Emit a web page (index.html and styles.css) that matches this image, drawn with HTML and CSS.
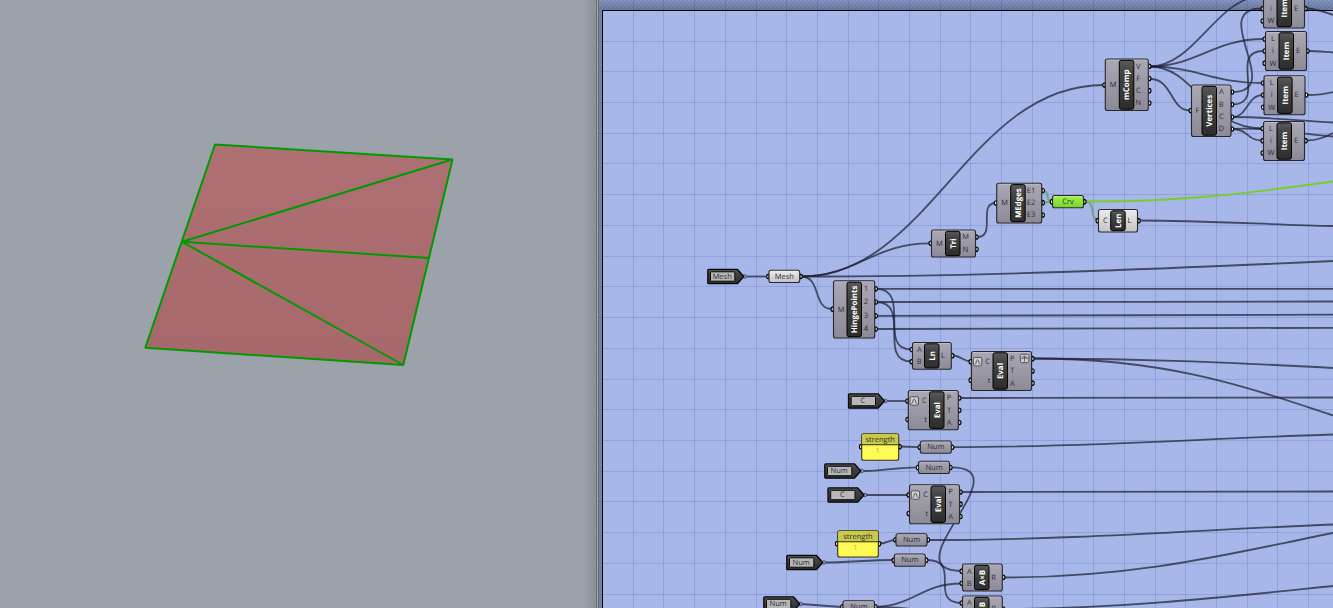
FILE: index.html
```html
<!DOCTYPE html>
<html lang="en">
<head>
<meta charset="utf-8">
<title>Mesh definition</title>
<link rel="stylesheet" href="styles.css">
</head>
<body>
<main class="workspace">
  <section class="viewport">
    <svg class="scene" viewBox="0 0 595 608">
      <defs>
        <linearGradient id="mesh-face" x1="0" y1="0" x2="0" y2="1"><stop offset="0" stop-color="#af7074"/><stop offset="1" stop-color="#a6686b"/></linearGradient>
      </defs>
      <path class="mesh" fill="url(#mesh-face)" d="M215 144.5 452.5 159.5 403.3 365 145.3 347.8Z"/>
      <path class="mesh-edge" d="M452.5 159.5 182 241.8 429 258M182 241.8 403.3 365"/>
    </svg>
  </section>
  <div class="splitter"></div>
  <section class="editor">
    <svg class="canvas" id="canvas" viewBox="599 0 734 608">
      <defs>
        <linearGradient id="grey" x1="0" y1="0" x2="0" y2="1"><stop offset="0" stop-color="#aaa8b5"/><stop offset="1" stop-color="#8c8a96"/></linearGradient>
        <linearGradient id="white" x1="0" y1="0" x2="0" y2="1"><stop offset="0" stop-color="#ececec"/><stop offset="1" stop-color="#c4c4c6"/></linearGradient>
        <linearGradient id="green" x1="0" y1="0" x2="0" y2="1"><stop offset="0" stop-color="#a2f250"/><stop offset="1" stop-color="#78d526"/></linearGradient>
        <linearGradient id="dark" x1="0" y1="0" x2="0" y2="1"><stop offset="0" stop-color="#5a5a5a"/><stop offset=".25" stop-color="#444"/><stop offset="1" stop-color="#2d2d2d"/></linearGradient>
        <linearGradient id="top-shade" x1="0" y1="0" x2="0" y2="1"><stop offset="0" stop-color="#8696c4"/><stop offset="1" stop-color="#68799d"/></linearGradient>
        <pattern id="hatch" width="4" height="4" patternUnits="userSpaceOnUse"><path d="M-1 1 1-1M0 4 4 0M3 5 5 3" stroke="#3c4c78" stroke-opacity=".22"/></pattern>
      </defs>
      <rect class="paper" x="599" width="734" height="608"/>
      <rect x="599" width="734" height="10" fill="url(#top-shade)"/>
      <rect x="599" y="10" width="3" height="598" fill="#7485ad"/>
      <path fill="url(#hatch)" d="M599 0H1333V10H602V608H599Z"/>
      <g id="grid"></g>
      <path class="paper-edge" d="M1333 10.5H602.5V608"/>
      <g id="wires"></g>
      <g id="nodes"></g>
    </svg>
  </section>
</main>
<script src="graph.js"></script>
</body>
</html>
```
FILE: styles.css
```css
body {
  margin: 0;
  overflow: hidden;
  font-family: "Open Sans", "Noto Sans", sans-serif;
}
.workspace {
  display: grid;
  grid-template-columns: 595px 4px 734px;
  width: 1333px;
  height: 608px;
}
.viewport {
  background: linear-gradient(90deg, #9ca2a9 0 583px, #8c9298 100%);
}
.splitter {
  background: linear-gradient(90deg, #8c9298 0 1px, #6f6f6f 1px 2px, #a3a3a3 2px 3px, #696a6c 3px);
}
.scene, .canvas { display: block; width: 100%; height: 100%; }
.canvas { text-rendering: geometricPrecision; }
.mesh { stroke: #009a00; stroke-width: 2; stroke-linejoin: bevel; }
.mesh-edge { fill: none; stroke: #009a00; stroke-width: 2; }
.paper { fill: #a7b7ea; }
.paper-edge { fill: none; stroke: #000; }
.grid-line { stroke: #0a1e8c; stroke-opacity: .14; }
.wire { fill: none; stroke: #1c2030; stroke-opacity: .72; stroke-width: 1.8; }
.wire.selected { stroke: #74cf29; stroke-opacity: 1; }
.wire.fading { stroke: #6b9f72; stroke-opacity: .9; }
.body { stroke: #28282c; stroke-width: 1.1; }
.shine { fill: none; stroke: #fff; stroke-opacity: .3; stroke-width: .8; }
.grey { fill: url(#grey); }
.white { fill: url(#white); }
.green { fill: url(#green); }
.pill { fill: url(#dark); stroke: #000; }
.port { fill: #fff; stroke: #000; stroke-width: 1.1; }
.label { font-size: 7.5px; fill: #2c2c33; text-anchor: middle; }
.title { font-size: 7.9px; font-weight: 700; fill: #fff; text-anchor: middle; }
.tag { fill: url(#dark); stroke: #08080a; stroke-width: 1.3; stroke-linejoin: round; }
.tag-screen { fill: #b7b7b8; stroke: #0a0a0a; }
.tag-tip { fill: #929cb8; stroke: #3b4258; stroke-width: .8; }
.panel { fill: #fffa55; stroke: #343416; stroke-width: 1.1; }
.panel-head { fill: #c9c94a; }
.panel-rule { stroke: #2c2c10; stroke-width: 1.1; }
.panel-value { font-size: 7.5px; fill: #bdb843; text-anchor: middle; }
.badge { fill: #cfcfd0; stroke: #4a4a4e; stroke-width: .9; }
.badge-mark { fill: none; stroke: #38383b; stroke-width: .8; }
```
FILE: graph.js
```js
const layer = id => document.getElementById(id);

// Grid
let lines = '';
for (let i = 0; i < 24; i++) {
  const x = Math.floor(633.2 + i * 30.7) + .5;
  lines += `<path class="grid-line" d="M${x} 0V608"/>`;
}
for (let i = 0; i < 19; i++) {
  const y = Math.floor(41 + i * 30.73) + .5;
  lines += `<path class="grid-line" d="M599 ${y}H1333"/>`;
}
layer('grid').innerHTML = lines;

// Wires: bezier paths between ports
const wires = [
  'M747 276.5H768',
  'M801 276.5C930 276.5 968 85 1104 85',
  'M801 276.5C858 276.5 872 243.3 930 243.3',
  'M801 276.5C980 276.5 1160 269 1333 261',
  'M801 276.5C822 276.5 812 309 832 309',
  'M977 237C997 237 977 203 996 203',
  'M1150 66.5C1195 66.5 1217-4 1263-4',
  'M1150 66.5C1195 66.5 1215 39 1263 39',
  'M1150 66.5C1195 66.5 1212 83 1263 83',
  'M1150 66.5C1195 66.5 1206 128.5 1262 128.5',
  'M1150 79C1173 79 1170 110.5 1190 110.5',
  'M1232 92C1287 92 1206 8.5 1262 8.5',
  'M1232 104.5C1268 104.5 1228 51 1263 51',
  'M1232 117C1248 117 1247 95 1263 95',
  'M1232 117C1270 117 1300 121 1333 122.5',
  'M1232 129C1248 129 1247 140.5 1262 140.5',
  'M1232 129C1270 127 1298 134 1333 136.5',
  'M1306 8.5C1316 8.5 1324 12 1333 15',
  'M1308 51C1317 51 1325 52 1333 52.5',
  'M1307 95C1317 95 1325 94 1333 92',
  'M1306 140.5C1318 140.5 1325 137 1333 133',
  'M1139 220.5C1210 220.5 1270 225 1333 226',
  'M876 288.8H1333',
  'M876 302C1030 302 1180 302 1333 301.5',
  'M876 315.8C1030 315.8 1180 315 1333 314.7',
  'M876 329C1030 329 1180 328 1333 327.8',
  'M876 288.8C912 288.8 877 349.5 911 349.5',
  'M876 302C912 302 877 361.5 911 361.5',
  'M953 355.5C960 355.5 964 361.5 971 361.5',
  'M1033 358.5C1150 358.5 1240 363 1333 368',
  'M1033 358.5C1170 358.5 1250 388 1333 415.5',
  'M887 401H907',
  'M960 398C1090 398 1210 397.5 1333 397.5',
  'M900 446.5 919 447.2',
  'M953 447.2C1100 447 1210 438 1333 434.5',
  'M864 471C882 471 899 467.3 917 467.3',
  'M951 467.3C1025 467.3 888 571 962 571',
  'M866 495H908',
  'M961 492C1090 492 1210 491.5 1333 491.5',
  'M880 543.5C887 543.5 889 540 895 540',
  'M929 540C1080 540 1210 529 1333 524.5',
  'M824 562.5C846 562.5 871 560 893 560',
  'M927 560C963 560 927 603 962 603',
  'M1004 577.5C1140 577.5 1232 553 1333 533',
  'M801 604 842 607',
  'M876 607C915 605 922 583.5 961 583.5',
  'M876 607C890 607 905 608 930 611',
  'M1004 609C1120 609 1235 596 1333 586'
];
layer('wires').innerHTML = wires.map(d => `<path class="wire" d="${d}"/>`).join('') +
  '<path class="wire fading" d="M1043 190.5C1050 190.5 1045 201.5 1052 201.5M1043 203 1052 201.5M1086 201.5C1096 201.5 1089 220.5 1099 220.5"/>' +
  '<path class="wire selected" d="M1086 201.5C1180 202 1250 193 1333 181.5"/>';

const text = (x, y, s, cls = 'label') => `<text class="${cls}" x="${x}" y="${y + 2.6}">${s}</text>`;
const inPort = (x, y) => `<path class="port" d="M${x} ${y - 2.3}A2.3 2.3 0 0 0 ${x} ${y + 2.3}Z"/>`;
const outPort = (x, y) => `<path class="port" d="M${x} ${y - 2.3}A2.3 2.3 0 0 1 ${x} ${y + 2.3}Z"/>`;
const box = (l, t, r, b, skin) =>
  `<rect class="body ${skin}" x="${l}" y="${t}" width="${r - l}" height="${b - t}" rx="2"/>` +
  `<path class="shine" d="M${l + 1.5} ${t + 1}H${r - 1.5}"/>`;

// [left, top, right, bottom, title, pillLeft, inputs, outputs, outputLabelX, skin]
const components = [
  [1105.3, 59, 1148.3, 110.5, 'mComp', 1119.3, [['M', 85]], [['V', 66.3], ['F', 78.5], ['C', 90.7], ['N', 103]], 1138.3],
  [1191.5, 85, 1231, 136.5, 'Vertices', 1202, [['F', 110.5]], [['A', 92], ['B', 104.5], ['C', 117], ['D', 129]], 1221.3],
  [1263.5, -11.5, 1304.5, 28, 'Item', 1277, [['L', -4], ['i', 8.7], ['W', 21]], [['E', 8.7]], 1296],
  [1265.5, 31.5, 1306.5, 70.5, 'Item', 1279, [['L', 39], ['i', 51], ['W', 63.2]], [['E', 51]], 1298],
  [1264, 75.8, 1305, 114.7, 'Item', 1277.6, [['L', 83], ['i', 95], ['W', 107.3]], [['E', 95]], 1296.5],
  [1263.5, 121.5, 1304.5, 160.5, 'Item', 1277, [['L', 128.5], ['i', 140.7], ['W', 153]], [['E', 140.7]], 1296],
  [931.5, 230, 975.5, 257, 'Tri', 945.5, [['M', 243.3]], [['M', 237], ['N', 249.3]], 965.5],
  [996.7, 183.3, 1041.7, 223, 'MEdges', 1010.7, [['M', 203]], [['E1', 190.5], ['E2', 202.7], ['E3', 215]], 1031],
  [1098.5, 209.5, 1137.5, 232, 'Len', 1110.7, [['C', 220.7]], [['L', 220.7]], 1129.5, 'white'],
  [833.5, 280.8, 874.7, 338, 'HingePoints', 847, [['M', 309.2]], [['1', 288.8], ['2', 302], ['3', 315.8], ['4', 329]], 866],
  [912.5, 342.5, 951.3, 369.3, 'Ln', 924.5, [['A', 349.5], ['B', 361.7]], [['L', 355.7]], 943],
  [971.5, 351.5, 1031.5, 390.5, 'Eval', 993, [['C', 361.7, 987.5], ['t', 380.2, 989]], [['P', 358.7], ['T', 371], ['A', 383.2]], 1012.3],
  [908.3, 390.5, 958.3, 429.7, 'Eval', 929.5, [['C', 401, 924.3], ['t', 419.5, 925.5]], [['P', 398], ['T', 410.3], ['A', 422.5]], 949],
  [909.5, 484.7, 959.5, 523.7, 'Eval', 931, [['C', 494.9, 925.7], ['t', 513.5, 926.8]], [['P', 492], ['T', 504.2], ['A', 516.5]], 950.5],
  [962.5, 564, 1002.3, 591, 'A×B', 974.5, [['A', 571.2], ['B', 583.3]], [['R', 577.3]], 993.5],
  [962.5, 596, 1002.3, 623, 'A×B', 974.5, [['A', 603], ['B', 615]], [['R', 609]], 993.5]
];
// [left, top, right, bottom, title, skin]
const params = [
  [1052.5, 195.5, 1083.5, 207.8, 'Crv', 'green'],
  [769, 270.3, 799.7, 282.5, 'Mesh', 'white'],
  [920.3, 441, 951.3, 453.3, 'Num', 'grey'],
  [918.5, 461.3, 949.5, 473.5, 'Num', 'grey'],
  [896, 533.7, 927, 546, 'Num', 'grey'],
  [894.3, 554, 925.3, 566.3, 'Num', 'grey'],
  [843, 600.7, 874.5, 613, 'Num', 'grey']
];
// [left, top, title]
const tags = [
  [707.8, 269.3, 'Mesh'], [848.5, 393.8, 'C'], [824.8, 463.8, 'Num'],
  [828, 487.8, 'C'], [786.8, 555.3, 'Num'], [763.8, 596.8, 'Num']
];
// [left, top, right, bottom]
const panels = [[861.7, 433.7, 898.7, 460.3], [837.7, 530.7, 878.3, 557]];

const badge = (x, y, mark) =>
  `<rect class="badge" x="${x - 4.2}" y="${y - 4.2}" width="8.4" height="8.4" rx="1.2"/><path class="badge-mark" transform="translate(${x} ${y})" d="${mark}"/>`;
const curveMark = 'M-3 2.5H-2.4C-1.2 2.5-1.6-1.8 0-1.8S1.2 2.5 2.4 2.5H3';
const graftMark = 'M0 3V-1.6M-2.7.8C-2.7-1-1.4-2.2 0-2.2S2.7-1 2.7.8M-1.4.2 0-1.4 1.4.2';

let out = '';
for (const [l, t, r, b, title, pill, ins, outs, lx, skin = 'grey'] of components) {
  out += ins.map(p => inPort(l - .2, p[1])).join('') + outs.map(p => outPort(r + .4, p[1])).join('');
  out += box(l, t, r, b, skin);
  out += `<rect class="pill" x="${pill}" y="${t + 1.3}" width="14.5" height="${b - t - 2.6}" rx="2"/>`;
  const cx = pill + 7.25, cy = (t + b) / 2;
  out += `<text class="title" transform="translate(${cx + 2.9} ${cy}) rotate(-90)">${title}</text>`;
  out += ins.map(p => text(p[2] || (l + pill) / 2 + .8, p[1] - .3, p[0])).join('');
  out += outs.map(p => text(lx, p[1] - .3, p[0])).join('');
}
for (const [l, t, r, b, title, skin] of params) {
  const y = (t + b) / 2;
  out += inPort(l, y) + outPort(r + .3, y) + box(l, t, r, b, skin) + text((l + r) / 2, y - .3, title);
}
for (const [l, t, title] of tags) {
  out += `<circle class="tag-tip" cx="${l + 37}" cy="${t + 7.2}" r="1.8"/>` +
    `<path class="tag" d="M${l + 1} ${t}H${l + 29.5}L${l + 36} ${t + 7.2} ${l + 29.5} ${t + 14.4}H${l + 1}Q${l} ${t + 14.4} ${l} ${t + 13.4}V${t + 1}Q${l} ${t} ${l + 1} ${t}Z"/>` +
    `<rect class="tag-screen" x="${l + 2.7}" y="${t + 2.5}" width="24.3" height="9.4" rx="1"/>` +
    text(l + 14.4, t + 6.8, title);
}
for (const [l, t, r, b] of panels) {
  out += inPort(l, t + 13) + outPort(r + .3, t + 13) +
    `<rect class="panel" x="${l}" y="${t}" width="${r - l}" height="${b - t}" rx="2"/>` +
    `<path class="panel-head" d="M${l + .6} ${t + 11}V${t + 1.5}L${l + 1.5} ${t + .6}H${r - 1.5}L${r - .6} ${t + 1.5}V${t + 11}Z"/>` +
    `<path class="panel-rule" d="M${l} ${t + 11}H${r}"/>` +
    text((l + r) / 2, t + 5.4, 'strength') + text((l + r) / 2 - 2.5, t + 17, '1', 'panel-value');
}
out += badge(977.6, 361.7, curveMark) + badge(914.2, 401, curveMark) + badge(915.4, 495, curveMark) + badge(1024.6, 358.4, graftMark);
layer('nodes').innerHTML = out;
```
